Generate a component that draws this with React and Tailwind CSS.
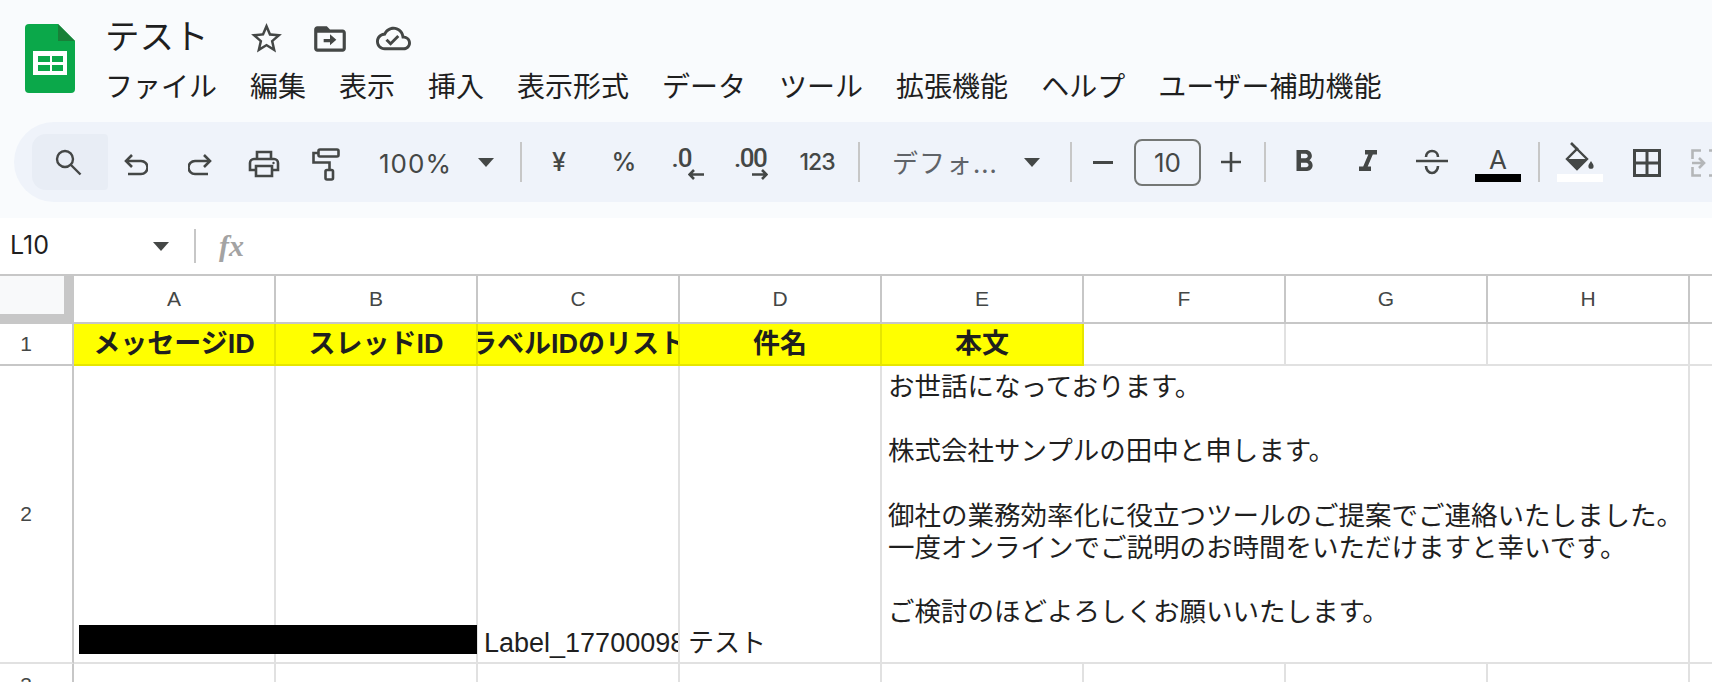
import React from "react";

const cjk = "font-['Liberation_Sans','Noto_Sans_CJK_JP',sans-serif]";
const ui = "font-['Inter','Noto_Sans_CJK_JP',sans-serif]";
const roboto = "font-['Roboto',sans-serif]";

const Caret = () => (
  <svg width="16" height="9" viewBox="0 0 16 9" className="shrink-0 fill-[#444746]">
    <path d="M0 0h16L8 9z" />
  </svg>
);

const Sep = ({ w }) => (
  <div className={`flex h-full shrink-0 items-center justify-center ${w}`}>
    <div className="h-[40px] w-[2px] bg-[#c7c7c7]" />
  </div>
);

// one toolbar slot, icon is centered in it
const Slot = ({ w, children }) => (
  <div className={`flex h-full shrink-0 items-center justify-center ${w}`}>{children}</div>
);

const SheetsLogo = () => (
  <svg width="50" height="69" viewBox="0 0 50 69" className="shrink-0">
    <path d="M4 0h29l17 17v48a4 4 0 0 1-4 4H4a4 4 0 0 1-4-4V4a4 4 0 0 1 4-4z" fill="#0ba84a" />
    <path d="M33 0l17 17H33z" fill="#188038" />
    <path d="M8 27h34v24H8z" fill="#fff" />
    <path d="M13 32h12v6H13zM27 32h11v6H27zM13 41h12v6H13zM27 41h11v6H27z" fill="#0ba84a" />
  </svg>
);

const Undo = ({ flip }) => (
  <svg width="24" height="22" viewBox="0 0 24 22" fill="none" stroke="#444746" strokeWidth="2.6" className="mt-[5px]">
    <g transform={flip ? "translate(24 0) scale(-1 1)" : undefined}>
      <path d="M8 1L2 7l6 6" />
      <path d="M2 7h15a5.9 5.9 0 0 1 0 13H4" />
    </g>
  </svg>
);

const ArrowSmall = ({ left }) => (
  <svg width="16" height="11" viewBox="0 0 16 11" fill="none" stroke="#444746" strokeWidth="2.6" className="self-end">
    <g transform={left ? undefined : "translate(16 0) scale(-1 1)"}>
      <path d="M6 1L1.5 5.5 6 10M2 5.5h14" />
    </g>
  </svg>
);

const Toolbar = () => (
  <div className="ml-[14px] flex h-[80px] items-center overflow-hidden rounded-l-[40px] bg-[#eff3fa] pl-[18px]">
    <div className="flex h-[56px] w-[76px] shrink-0 items-center justify-center rounded-l-[14px] rounded-r-[4px] bg-[#e8edf5] pr-[4px]">
      <svg width="28" height="28" viewBox="0 0 28 28" fill="none" stroke="#444746" strokeWidth="2.4">
        <circle cx="11" cy="11" r="8" />
        <path d="M17 17l9.5 9.5" />
      </svg>
    </div>

    <Slot w="w-[56px]"><Undo /></Slot>
    <Slot w="w-[72px]"><Undo flip /></Slot>
    <Slot w="w-[56px]">
      <svg width="32" height="28" viewBox="0 0 32 28" fill="none" stroke="#444746" strokeWidth="2.6" className="mt-[3px]">
        <path d="M9 9V2h14v7" />
        <path d="M8 20H2v-7a4 4 0 0 1 4-4h20a4 4 0 0 1 4 4v7h-6" />
        <path d="M8 16h16v10H8z" />
        <circle cx="25.5" cy="13" r="1.2" fill="#444746" stroke="none" />
      </svg>
    </Slot>
    <Slot w="w-[68px]">
      <svg width="28" height="33" viewBox="0 0 28 33" fill="none" stroke="#444746" strokeWidth="2.6" className="mt-[5px]">
        <rect x="6.5" y="1.5" width="20" height="7" rx="1.5" />
        <path d="M6 5H1.5v9.5h16V22" />
        <rect x="13.5" y="22" width="7.5" height="9.5" rx="1.5" />
      </svg>
    </Slot>

    <div className="flex h-full w-[146px] shrink-0 items-center justify-between pl-[19px] pr-[12px]">
      <span className={`${ui} mt-[4px] text-[26px] leading-none tracking-[1px] text-[#444746]`}>100%</span>
      <Caret />
    </div>
    <Sep w="w-[30px]" />

    <Slot w="w-[46px]"><span className={`${ui} text-[25px] font-medium leading-none text-[#444746]`}>¥</span></Slot>
    <Slot w="w-[84px]"><span className={`${ui} text-[25px] font-medium leading-none text-[#444746]`}>%</span></Slot>
    <Slot w="w-[42px]">
      <div className="flex w-[33px] flex-col pt-[2px]">
        <span className={`${roboto} pl-[1px] text-[26px] font-medium leading-[22px] tracking-[-1px] text-[#444746]`}>.0</span>
        <ArrowSmall left />
      </div>
    </Slot>
    <Slot w="w-[86px]">
      <div className="flex w-[34px] flex-col pt-[2px]">
        <span className={`${roboto} text-[26px] font-medium leading-[22px] tracking-[-1.5px] text-[#444746]`}>.00</span>
        <ArrowSmall />
      </div>
    </Slot>
    <Slot w="w-[46px]"><span className={`${ui} text-[23px] font-medium leading-none tracking-[-1px] text-[#444746]`}>123</span></Slot>
    <Sep w="w-[38px]" />

    <div className="flex h-full w-[174px] shrink-0 items-center justify-between pl-[14px] pr-[12px]">
      <span className="font-['Noto_Sans_CJK_JP',sans-serif] text-[26px] leading-none text-[#5f6368] tracking-[1px]">デフォ...</span>
      <Caret />
    </div>
    <Sep w="w-[38px]" />

    <Slot w="w-[26px]"><div className="h-[3px] w-[20px] bg-[#444746]" /></Slot>
    <div className={`${ui} ml-[18px] flex h-[47px] w-[67px] shrink-0 items-center justify-center rounded-[8px] border-2 border-[#747775] text-[26px] text-[#444746]`}>
      10
    </div>
    <Slot w="w-[60px]">
      <svg width="20" height="20" viewBox="0 0 20 20" stroke="#444746" strokeWidth="2.6">
        <path d="M0 10h20M10 0v20" />
      </svg>
    </Slot>
    <Sep w="w-[8px]" />

    <Slot w="w-[70px]">
      <svg width="36" height="36" viewBox="0 0 24 24" fill="#444746">
        <path d="M15.6 10.79c.97-.67 1.65-1.77 1.65-2.79 0-2.26-1.75-4-4-4H7v14h7.04c2.09 0 3.71-1.7 3.71-3.79 0-1.52-.86-2.82-2.15-3.42zM10 6.5h3c.83 0 1.5.67 1.5 1.5s-.67 1.5-1.5 1.5h-3v-3zm3.5 9H10v-3h3.5c.83 0 1.5.67 1.5 1.5s-.67 1.5-1.5 1.5z" />
      </svg>
    </Slot>
    <Slot w="w-[58px]">
      <svg width="36" height="36" viewBox="0 0 24 24" fill="#444746">
        <path d="M10 4v3h2.21l-3.42 8H6v3h8v-3h-2.21l3.42-8H18V4z" />
      </svg>
    </Slot>
    <Slot w="w-[70px]">
      <svg width="32" height="26" viewBox="0 0 32 26" fill="none" stroke="#444746" strokeWidth="2.6">
        <path d="M0 12h32" />
        <path d="M10 8c0-3.6 2.6-6 6-6s6 2.4 6 6" />
        <path d="M10 17c0 3.8 2.6 7 6 7s6-3.2 6-7" />
      </svg>
    </Slot>
    <div className="flex h-full w-[62px] shrink-0 flex-col items-center justify-end pb-[20px]">
      <span className={`${ui} text-[26px] leading-[26px] text-[#444746]`}>A</span>
      <div className="mt-[1px] h-[8px] w-[46px] bg-black" />
    </div>
    <Sep w="w-[20px]" />
    <div className="flex h-full w-[62px] shrink-0 flex-col items-center justify-end pb-[20px]">
      <svg width="30" height="29" viewBox="0 0 30 29" className="mb-[3px]">
        <path d="M6 1l7 7" fill="none" stroke="#444746" strokeWidth="2.6" />
        <path d="M12 7l10 10-10 10L2 17z" fill="none" stroke="#444746" strokeWidth="2.4" />
        <path d="M2 17h20L12 27z" fill="#444746" />
        <path d="M26 19c-1.6 2.5-2.6 3.7-2.6 5.2a2.6 2.6 0 0 0 5.2 0c0-1.5-1-2.7-2.6-5.2z" fill="#444746" />
      </svg>
      <div className="h-[8px] w-[46px] bg-white" />
    </div>
    <Slot w="w-[72px]">
      <svg width="28" height="28" viewBox="0 0 28 28" fill="none" stroke="#444746" strokeWidth="3" className="mt-[2px]">
        <path d="M1.5 1.5h25v25h-25zM14 1.5v25M1.5 14h25" />
      </svg>
    </Slot>
    <Slot w="w-[44px]">
      <svg width="28" height="28" viewBox="0 0 28 28" fill="none" stroke="#b4b6b8" strokeWidth="2.6" className="mt-[2px]">
        <path d="M10 1.5H1.5V10M1.5 18v8.5H10M18 1.5h8.5V10M26.5 18v8.5H18" />
        <path d="M1 14h11M8 9l5 5-5 5" />
      </svg>
    </Slot>
  </div>
);

const columns = ["A", "B", "C", "D", "E", "F", "G", "H"];
const titles = ["メッセージID", "スレッドID", "ラベルIDのリスト", "件名", "本文"];
const menus = ["ファイル", "編集", "表示", "挿入", "表示形式", "データ", "ツール", "拡張機能", "ヘルプ", "ユーザー補助機能"];

const body = `お世話になっております。

株式会社サンプルの田中と申します。

御社の業務効率化に役立つツールのご提案でご連絡いたしました。
一度オンラインでご説明のお時間をいただけますと幸いです。

ご検討のほどよろしくお願いいたします。`;

const cellLine = "border-r-2 border-b-2 border-[#e1e1e1]";
const headLine = "border-r-2 border-b-2 border-[#c7c7c7]";
const rowNum = `${cjk} flex items-center border-r-2 border-[#c7c7c7] pr-[20px] text-[21px] text-[#444746]`;

const Sheet = () => (
  <div className={`${cjk} grid grid-cols-[74px_repeat(8,202px)_1fr] grid-rows-[48px_42px_298px_42px] border-t-2 border-[#c7c7c7] text-[26px] text-[#1f1f1f]`}>
    {/* column headers */}
    <div className="border-r-[10px] border-b-[10px] border-[#c7c7c7] bg-[#f8f9fa]" />
    {columns.map((c) => (
      <div key={c} className={`${headLine} flex items-center justify-center text-[21px] text-[#444746]`}>
        {c}
      </div>
    ))}
    <div className="border-b-2 border-[#c7c7c7]" />

    {/* row 1 */}
    <div className={`${rowNum} justify-center border-b-2 border-b-[#c7c7c7]`}>1</div>
    {titles.map((t) => (
      <div key={t} className="flex items-center justify-center overflow-hidden whitespace-nowrap border-r-2 border-b-2 border-[#e6e600] bg-[#ffff00] text-[27px] font-bold">
        <span className="shrink-0">{t}</span>
      </div>
    ))}
    <div className={cellLine} />
    <div className={cellLine} />
    <div className={cellLine} />
    <div className="border-b-2 border-[#e1e1e1]" />

    {/* row 2 */}
    <div className={`${rowNum} justify-center border-b-2 border-b-[#e1e1e1]`}>2</div>
    <div className={`${cellLine} relative`}>
      <div className="absolute bottom-[8px] left-[5px] z-10 h-[29px] w-[398px] bg-black" />
    </div>
    <div className={cellLine} />
    <div className={`${cellLine} flex items-end overflow-hidden whitespace-nowrap pb-[3px] pl-[6px] text-[27px] leading-[32px]`}>
      Label_17700098
    </div>
    <div className={`${cellLine} flex items-end overflow-hidden whitespace-nowrap pb-[3px] pl-[8px] leading-[32px]`}>
      テスト
    </div>
    <div className={`${cellLine} col-span-4 whitespace-pre-line pl-[6px] pt-[5px] text-[26.5px] leading-[32.15px]`}>{body}</div>
    <div className="border-b-2 border-[#e1e1e1]" />

    {/* row 3, cut by the window */}
    <div className={`${rowNum} justify-center`}>3</div>
    {columns.map((c) => (
      <div key={c} className={cellLine} />
    ))}
    <div />
  </div>
);

export default function App() {
  return (
    <div className="h-[682px] w-[1712px] overflow-hidden bg-white">
      <div className="h-[218px] bg-[#f9fbfd]">
        <div className="flex h-[122px] pl-[25px] pt-[24px]">
          <SheetsLogo />
          <div className="ml-[30px] flex flex-col">
            <div className="-mt-[12px] flex h-[44px] items-center">
              <span className="w-[143px] font-['Noto_Sans_CJK_JP',sans-serif] text-[34.5px] leading-none text-[#1f1f1f]">テスト</span>
              <svg width="37" height="37" viewBox="0 0 24 24" fill="#444746" className="mt-[9px]">
                <path d="M22 9.24l-7.19-.62L12 2 9.19 8.63 2 9.24l5.46 4.73L5.82 21 12 17.27 18.18 21l-1.63-7.03L22 9.24zM12 15.4l-3.76 2.27 1-4.28-3.32-2.88 4.38-.38L12 6.1l1.71 4.04 4.38.38-3.32 2.88 1 4.28L12 15.4z" />
              </svg>
              <svg width="38" height="38" viewBox="0 0 24 24" fill="#444746" className="ml-[26px] mt-[9px]">
                <path d="M20 6h-8l-2-2H4c-1.11 0-2 .89-2 2v12c0 1.11.89 2 2 2h16c1.11 0 2-.89 2-2V8c0-1.11-.89-2-2-2zm0 12H4V8h16v10zm-8-1v-3H8v-2h4V9l4 3.5-4 3.5z" />
              </svg>
              <svg width="35" height="35" viewBox="0 0 24 24" fill="#444746" className="ml-[27px] mt-[8px]">
                <path d="M19.35 10.04C18.67 6.59 15.64 4 12 4 9.11 4 6.6 5.64 5.35 8.04 2.34 8.36 0 10.91 0 14c0 3.31 2.69 6 6 6h13c2.76 0 5-2.24 5-5 0-2.64-2.05-4.78-4.65-4.96zM19 18H6c-2.21 0-4-1.79-4-4 0-2.05 1.53-3.76 3.56-3.97l1.07-.11.5-.95C8.08 7.14 9.94 6 12 6c2.62 0 4.88 1.86 5.39 4.43l.3 1.5 1.53.11c1.56.1 2.78 1.41 2.78 2.96 0 1.65-1.35 3-3 3zm-9-3.82l-2.09-2.09L6.5 13.5 10 17l6.01-6.01-1.41-1.41z" />
              </svg>
            </div>
            <div className="mt-[11px] flex h-[36px] items-center gap-[33px] whitespace-nowrap font-['Noto_Sans_CJK_JP',sans-serif] text-[28px] leading-none text-[#1f1f1f]">
              {menus.map((m) => (
                <span key={m}>{m}</span>
              ))}
            </div>
          </div>
        </div>
        <Toolbar />
      </div>

      {/* name box + formula bar */}
      <div className="flex h-[56px] items-center">
        <span className={`${ui} w-[153px] pl-[10px] text-[25px] text-[#1f1f1f]`}>L10</span>
        <Caret />
        <div className="ml-[25px] h-[34px] w-[2px] bg-[#c7c7c7]" />
        <span className="ml-[23px] font-['Liberation_Serif',serif] text-[30px] font-bold italic leading-none text-[#a3a3a3]">fx</span>
      </div>

      <Sheet />
    </div>
  );
}
